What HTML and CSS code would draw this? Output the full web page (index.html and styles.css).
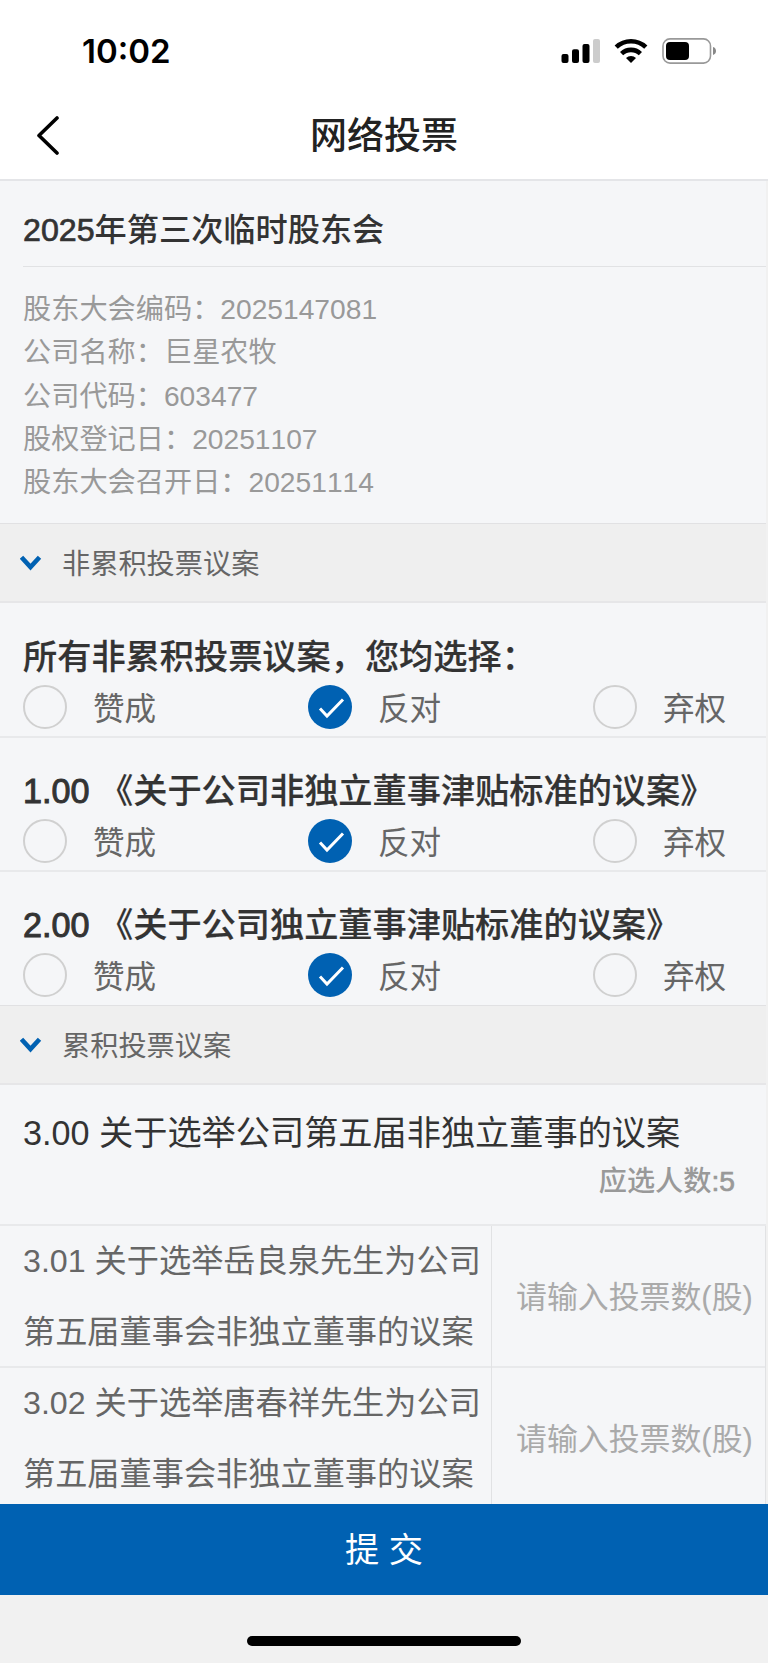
FILE: index.html
```html
<!DOCTYPE html>
<html lang="zh-CN">
<head>
    <meta charset="UTF-8">
    <meta name="viewport" content="width=device-width, initial-scale=1.0">
    <title>网络投票</title>
    <link rel="stylesheet" href="styles.css">
</head>
<body>

    <div class="status-bar">
        <span class="time">10:02</span>
        <svg class="status-icons" width="156" height="28" viewBox="0 0 156 28">
            <!-- signal -->
            <rect x="1.5" y="17" width="7" height="9" rx="2"/>
            <rect x="12" y="12.3" width="7" height="13.7" rx="2"/>
            <rect x="22.5" y="7" width="7" height="19" rx="2"/>
            <rect x="33" y="2" width="7" height="24" rx="2" fill="#ccc"/>
            <!-- wifi -->
            <g fill="none" stroke="#000" stroke-width="4.6">
                <path d="M56.2 10.2a21.5 21.5 0 0 1 29.6 0"/>
                <path d="M61.6 16.6a13.6 13.6 0 0 1 18.8 0"/>
            </g>
            <path d="M71 26l-5-5.1a7.4 7.4 0 0 1 10 0z"/>
            <!-- battery -->
            <rect x="103" y="1.9" width="47.5" height="24.2" rx="7" fill="none" stroke="#999" stroke-width="1.6"/>
            <rect x="106" y="5" width="23" height="18" rx="4"/>
            <path d="M153 10v8c2-.6 3-2.2 3-4s-1-3.4-3-4z" fill="#888"/>
        </svg>
    </div>

    <div class="nav">
        <svg class="back" width="24" height="40" viewBox="0 0 24 40">
            <path d="M21 2L3 19.5 21 37" fill="none" stroke="#000" stroke-width="3.6" stroke-linecap="round" stroke-linejoin="round"/>
        </svg>
        <h1>网络投票</h1>
    </div>

    <div class="page">
        <h2 class="meeting-title"><span class="num">2025</span>年第三次临时股东会</h2>

        <div class="meeting-info">
            <p>股东大会编码：2025147081</p>
            <p>公司名称：巨星农牧</p>
            <p>公司代码：603477</p>
            <p>股权登记日：20251107</p>
            <p>股东大会召开日：20251114</p>
        </div>

        <div class="section-head">
            <svg width="22" height="16" viewBox="0 0 22 16"><path d="M1.5 2.2L10.5 12 19.5 2.2"/></svg>
            <span>非累积投票议案</span>
        </div>

        <div class="proposal">
            <h3>所有非累积投票议案，您均选择：</h3>
            <div class="options">
                <div class="option"><i class="radio"></i><span>赞成</span></div>
                <div class="option"><i class="radio checked"><svg width="44" height="44" viewBox="0 0 44 44"><path d="M12 23.5l7 7.5L35 14.5"/></svg></i><span>反对</span></div>
                <div class="option"><i class="radio"></i><span>弃权</span></div>
            </div>
        </div>

        <div class="proposal second">
            <h3><span class="num">1.00</span> 《关于公司非独立董事津贴标准的议案》</h3>
            <div class="options">
                <div class="option"><i class="radio"></i><span>赞成</span></div>
                <div class="option"><i class="radio checked"><svg width="44" height="44" viewBox="0 0 44 44"><path d="M12 23.5l7 7.5L35 14.5"/></svg></i><span>反对</span></div>
                <div class="option"><i class="radio"></i><span>弃权</span></div>
            </div>
        </div>

        <div class="proposal last">
            <h3><span class="num">2.00</span> 《关于公司独立董事津贴标准的议案》</h3>
            <div class="options">
                <div class="option"><i class="radio"></i><span>赞成</span></div>
                <div class="option"><i class="radio checked"><svg width="44" height="44" viewBox="0 0 44 44"><path d="M12 23.5l7 7.5L35 14.5"/></svg></i><span>反对</span></div>
                <div class="option"><i class="radio"></i><span>弃权</span></div>
            </div>
        </div>

        <div class="section-head">
            <svg width="22" height="16" viewBox="0 0 22 16"><path d="M1.5 2.2L10.5 12 19.5 2.2"/></svg>
            <span>累积投票议案</span>
        </div>

        <div class="election">
            <h3>3.00 关于选举公司第五届非独立董事的议案</h3>
            <p class="seats">应选人数<span class="num">:5</span></p>
        </div>

        <div class="candidate">
            <div class="name">3.01 关于选举岳良泉先生为公司<br>第五届董事会非独立董事的议案</div>
            <input class="votes" type="text" placeholder="请输入投票数(股)">
        </div>
        <div class="candidate">
            <div class="name">3.02 关于选举唐春祥先生为公司<br>第五届董事会非独立董事的议案</div>
            <input class="votes" type="text" placeholder="请输入投票数(股)">
        </div>
    </div>

    <button class="submit">提 交</button>
    <div class="home"><div class="home-bar"></div></div>

</body>
</html>
```
FILE: styles.css
```css
* {
    box-sizing: border-box;
}

body {
    margin: 0;
    height: 1663px;
    overflow: hidden;
    display: flex;
    flex-direction: column;
    background: #f1f1f1;
    color: #333;
    font-family: "Liberation Sans", "Noto Sans CJK SC", sans-serif;
    font-kerning: none;
}

h1, h2, h3, p {
    margin: 0;
    font-weight: 500;
}

/* Liberation Sans has no medium weight, thicken the digits a bit */
.num {
    -webkit-text-stroke: 0.7px currentColor;
}

.status-bar {
    flex: none;
    height: 92px;
    padding: 10px 52px 0 82px;
    display: flex;
    align-items: center;
    justify-content: space-between;
    background: #fff;
}

.time {
    font-family: Inter, sans-serif;
    font-size: 33px;
    font-weight: 600;
    color: #000;
}

.nav {
    flex: none;
    height: 89px;
    padding: 0 36px;
    display: grid;
    grid-template-columns: 24px 1fr 24px;
    align-items: center;
    background: #fff;
    border-bottom: 2px solid #e4e5e8;
}

.nav h1 {
    padding-top: 2px;
    font-size: 37px;
    line-height: 52px;
    text-align: center;
    color: #222;
}

.page {
    width: 766px;
    height: 1323px;
    flex: none;
    overflow: hidden;
    background: #f5f6f8;
}

.meeting-title {
    height: 86px;
    margin-left: 23px;
    padding-top: 13px;
    font-size: 32.2px;
    line-height: 73px;
    border-bottom: 1px solid #e1e2e4;
}

.meeting-info {
    height: 256px;
    padding: 21px 23px 0;
    font-size: 28.2px;
    line-height: 43.3px;
    color: #999;
}

.meeting-info p {
    font-weight: 400;
}

.section-head {
    height: 80px;
    padding-left: 20px;
    display: flex;
    align-items: center;
    gap: 20px;
    font-size: 28.2px;
    color: #666;
    background: #efefef;
    border-top: 1px solid #e1e1e3;
    border-bottom: 2px solid #e6e6e8;
}

.section-head svg {
    margin-top: 1px;
}

.section-head span {
    padding-bottom: 2px;
}

.section-head path {
    fill: none;
    stroke: #0061b2;
    stroke-width: 4.6;
}

.proposal {
    height: 135px;
    padding: 32px 0 0 23px;
    border-bottom: 2px solid #e8e9eb;
}

.proposal.second {
    height: 134px;
    padding-top: 31px;
}

.proposal.last {
    height: 133px;
    padding-top: 31px;
    border-bottom: none;
}

.proposal h3 {
    margin-bottom: 6px;
    font-size: 34.2px;
    line-height: 44px;
    white-space: nowrap;
    -webkit-text-stroke: 0.2px currentColor;
}

.proposal .num {
    -webkit-text-stroke-width: 1px;
}

.options {
    display: grid;
    grid-template-columns: 285px 285px 1fr;
}

.option {
    display: flex;
    align-items: center;
    gap: 26px;
    height: 44px;
    font-size: 31.6px;
    line-height: 44px;
    color: #666;
}

.option span {
    padding-top: 3px;
}

.radio {
    width: 44px;
    height: 44px;
    border: 2px solid #d0d0d0;
    border-radius: 50%;
}

.radio.checked {
    border: none;
    background: #0061b2;
}

.radio svg {
    display: block;
}

.radio path {
    fill: none;
    stroke: #fff;
    stroke-width: 3;
}

.election {
    height: 141px;
    padding: 25px 31px 0 23px;
    border-bottom: 2px solid #e8e9eb;
}

.election h3 {
    font-size: 34.2px;
    font-weight: 400;
    line-height: 46px;
}

.seats {
    margin-top: 5px;
    font-size: 28.2px;
    line-height: 40px;
    text-align: right;
    color: #999;
}

.candidate {
    height: 142px;
    display: grid;
    grid-template-columns: 491px 1fr;
    border-bottom: 2px solid #e8e9eb;
}

.name {
    padding-left: 23px;
    font-size: 32.2px;
    line-height: 71px;
    white-space: nowrap;
    color: #666;
}

.votes {
    min-width: 0;
    padding: 2px 0 0 24px;
    border: solid #e1e2e4;
    border-width: 0 1px;
    background: transparent;
    font-family: inherit;
    font-size: 30.9px;
}

.votes::placeholder {
    color: #aaa;
}

.submit {
    flex: none;
    height: 91px;
    padding: 0 0 5px;
    border: none;
    background: #0061b2;
    color: #fff;
    font-family: inherit;
    font-size: 34.2px;
}

.home {
    flex: 1;
    display: flex;
    justify-content: center;
    padding-top: 41px;
}

.home-bar {
    width: 274px;
    height: 10px;
    border-radius: 5px;
    background: #000;
}
```
